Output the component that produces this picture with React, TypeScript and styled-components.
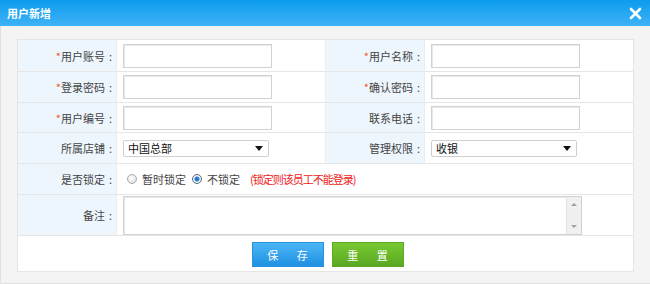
import React from "react";
import styled, { createGlobalStyle } from "styled-components";

const GlobalStyle = createGlobalStyle`
  html, body {
    margin: 0;
    padding: 0;
    background: #ffffff;
  }
  body {
    font-family: "Noto Sans CJK SC", "Noto Sans", sans-serif;
    font-size: 11px;
    color: #333;
  }
`;

const Dialog = styled.div`
  width: 650px;
  height: 284px;
  display: flex;
  flex-direction: column;
  box-sizing: border-box;
`;

const Header = styled.div`
  height: 26px;
  flex-shrink: 0;
  display: flex;
  align-items: center;
  justify-content: space-between;
  padding: 0 8px 0 7px;
  background: linear-gradient(to bottom, #0c9cee, #3fb2f6);
`;

const Title = styled.h1`
  margin: 0;
  font-size: 11px;
  font-weight: bold;
  color: #fff;
`;

const Close = styled.button`
  border: none;
  background: none;
  padding: 0;
  width: 13px;
  height: 13px;
  display: flex;
  cursor: pointer;
`;

const Body = styled.div`
  flex: 1;
  background: #f4f4f4;
  border-left: 1px solid #e0e0e0;
  border-bottom: 1px solid #e0e0e0;
  padding: 13px 16px 0 16px;
`;

const FormTable = styled.div`
  display: grid;
  grid-template-columns: 99px 209px 99px 209px;
  grid-template-rows: 32px 31px 30px 31px 31px 41px 36px;
  background: #fff;
  border: 1px solid #e4e4e4;
  border-bottom: none;
`;

const Cell = styled.div<{ $span?: number; $last?: boolean }>`
  box-sizing: border-box;
  grid-column: span ${(p) => p.$span ?? 1};
  border-bottom: 1px solid #e6e6e6;
  border-right: ${(p) => (p.$last ? "none" : "1px solid #ececec")};
  display: flex;
  align-items: center;
`;

const LabelCell = styled(Cell)`
  justify-content: flex-end;
  padding-right: 4px;
  background: #eef6fd;
  color: #444;
  white-space: nowrap;
`;

const ValueCell = styled(Cell)`
  padding-left: 6px;
`;

const Star = styled.span`
  color: #f05a28;
`;

const Colon = styled.span`
  margin-left: 4px;
`;

const TextInput = styled.input`
  box-sizing: border-box;
  width: 149px;
  height: 24px;
  border: 1px solid #d2d2d2;
  box-shadow: inset 1px 1px 0 #e8e8e8;
  outline: none;
  font: inherit;
  padding: 0 4px;
`;

const Select = styled.div`
  box-sizing: border-box;
  width: 146px;
  height: 17px;
  border: 1px solid #cfcfcf;
  border-radius: 2px;
  display: flex;
  align-items: center;
  justify-content: space-between;
  padding: 0 5px 0 4px;
  color: #111;
  font-size: 11px;
  background: #fff;
`;

const Arrow = styled.span`
  width: 0;
  height: 0;
  border-left: 4px solid transparent;
  border-right: 4px solid transparent;
  border-top: 5px solid #111;
`;

const RadioGroup = styled.div`
  display: flex;
  align-items: center;
  gap: 6px;
  padding-left: 4px;
`;

const RadioItem = styled.label`
  display: flex;
  align-items: center;
  gap: 5px;
  color: #444;
`;

const RadioDot = styled.span<{ $checked?: boolean }>`
  box-sizing: border-box;
  width: 10px;
  height: 10px;
  border-radius: 50%;
  border: 1px solid ${(p) => (p.$checked ? "#5a6d80" : "#a9a9a9")};
  background: ${(p) =>
    p.$checked
      ? "radial-gradient(circle, #1b5fa8 0, #2d8be0 2px, #e8eef5 3px, #f7f9fb 100%)"
      : "radial-gradient(circle at 40% 35%, #ffffff 0, #e4e4e4 70%, #cfcfcf 100%)"};
`;

const Hint = styled.span`
  color: #f02020;
  margin-left: 4px;
  letter-spacing: -1px;
`;

const TextAreaBox = styled.div`
  box-sizing: border-box;
  width: 459px;
  height: 39px;
  margin-top: 1px;
  border: 1px solid #d2d2d2;
  box-shadow: inset 1px 1px 0 #e8e8e8;
  display: flex;
  background: #fff;
`;

const TextArea = styled.textarea`
  flex: 1;
  border: none;
  outline: none;
  resize: none;
  font: inherit;
  background: transparent;
`;

const ScrollTrack = styled.div`
  width: 14px;
  background: #f0f0f0;
  border-left: 1px solid #e2e2e2;
  display: flex;
  flex-direction: column;
  justify-content: space-between;
  align-items: center;
  padding: 6px 0;
`;

const ScrollArrow = styled.span<{ $up?: boolean }>`
  width: 0;
  height: 0;
  border-left: 3px solid transparent;
  border-right: 3px solid transparent;
  ${(p) =>
    p.$up ? "border-bottom: 3px solid #a0a0a0;" : "border-top: 3px solid #a0a0a0;"}
`;

const ButtonRow = styled(Cell)`
  justify-content: center;
  gap: 8px;
  padding-left: 3px;
  padding-top: 2px;
`;

const ActionButton = styled.button<{ $tone: "blue" | "green" }>`
  width: 72px;
  height: 25px;
  border: 1px solid ${(p) => (p.$tone === "blue" ? "#2a92dc" : "#5aaa22")};
  background: ${(p) =>
    p.$tone === "blue"
      ? "linear-gradient(to bottom, #4cb5f5, #1f91e2)"
      : "linear-gradient(to bottom, #79c931, #5aa823)"};
  color: #fff;
  font-family: inherit;
  font-size: 11px;
  word-spacing: 16px;
  padding: 0;
  cursor: pointer;
`;

type Field = { label: string; required?: boolean };

const rows: [Field, Field][] = [
  [{ label: "用户账号", required: true }, { label: "用户名称", required: true }],
  [{ label: "登录密码", required: true }, { label: "确认密码", required: true }],
  [{ label: "用户编号", required: true }, { label: "联系电话" }],
];

const Label = ({ field }: { field: Field }) => (
  <>
    {field.required && <Star>*</Star>}
    {field.label}
    <Colon>:</Colon>
  </>
);

export default function App() {
  return (
    <>
      <GlobalStyle />
      <Dialog>
        <Header>
          <Title>用户新增</Title>
          <Close aria-label="关闭">
            <svg viewBox="0 0 13 13" width="13" height="13">
              <path d="M2 2 L11 11 M11 2 L2 11" stroke="#fff" strokeWidth="2.6" strokeLinecap="round" />
            </svg>
          </Close>
        </Header>
        <Body>
          <FormTable>
            {rows.map(([a, b]) => (
              <React.Fragment key={a.label}>
                <LabelCell><Label field={a} /></LabelCell>
                <ValueCell><TextInput /></ValueCell>
                <LabelCell><Label field={b} /></LabelCell>
                <ValueCell $last><TextInput /></ValueCell>
              </React.Fragment>
            ))}
            <LabelCell><Label field={{ label: "所属店铺" }} /></LabelCell>
            <ValueCell>
              <Select>中国总部<Arrow /></Select>
            </ValueCell>
            <LabelCell><Label field={{ label: "管理权限" }} /></LabelCell>
            <ValueCell $last>
              <Select>收银<Arrow /></Select>
            </ValueCell>

            <LabelCell><Label field={{ label: "是否锁定" }} /></LabelCell>
            <ValueCell $span={3} $last>
              <RadioGroup>
                <RadioItem><RadioDot />暂时锁定</RadioItem>
                <RadioItem><RadioDot $checked />不锁定</RadioItem>
                <Hint>(锁定则该员工不能登录)</Hint>
              </RadioGroup>
            </ValueCell>

            <LabelCell><Label field={{ label: "备注" }} /></LabelCell>
            <ValueCell $span={3} $last>
              <TextAreaBox>
                <TextArea />
                <ScrollTrack>
                  <ScrollArrow $up />
                  <ScrollArrow />
                </ScrollTrack>
              </TextAreaBox>
            </ValueCell>

            <ButtonRow $span={4} $last>
              <ActionButton $tone="blue">保 存</ActionButton>
              <ActionButton $tone="green">重 置</ActionButton>
            </ButtonRow>
          </FormTable>
        </Body>
      </Dialog>
    </>
  );
}
